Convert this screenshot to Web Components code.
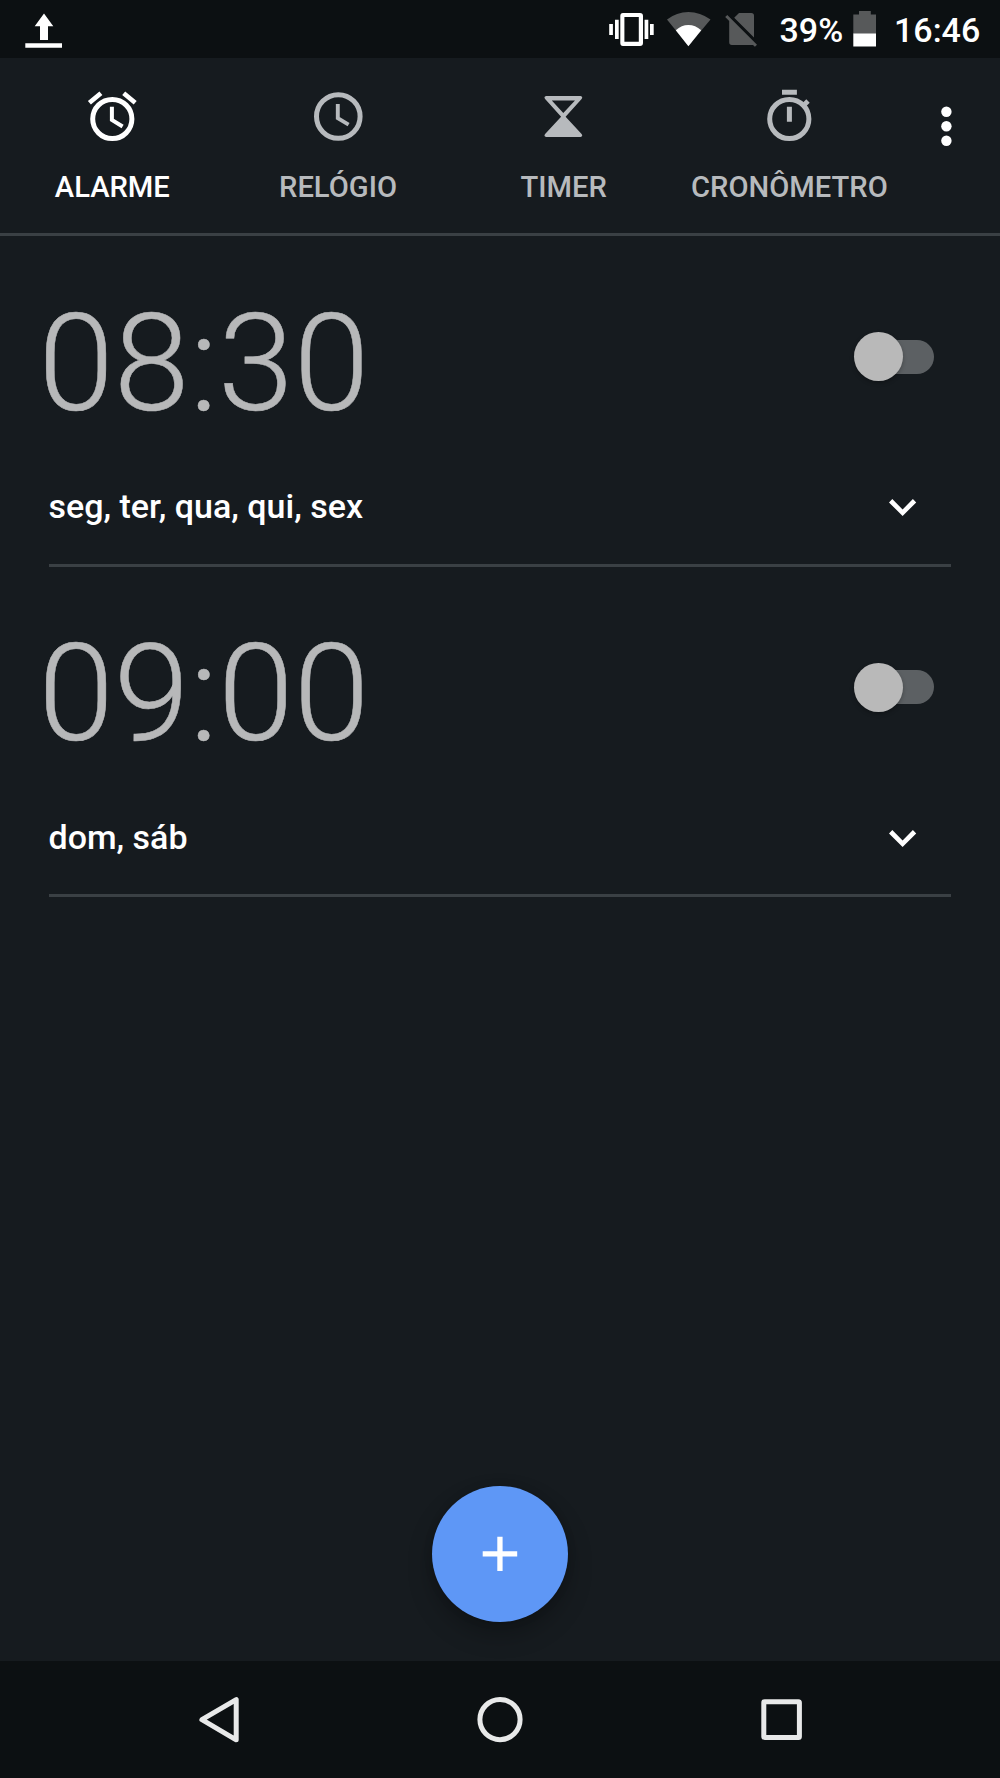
<!DOCTYPE html>
<html lang="pt-BR">
<head>
<meta charset="utf-8">
<title>Relógio</title>
<style>
html,body{margin:0;padding:0;background:#161b1f}
body{width:1000px;height:1778px;overflow:hidden;font-family:Roboto,"Liberation Sans",sans-serif;color:#fff}
</style>
</head>
<body>
<clock-app></clock-app>
<script>
const define = (name, html) => customElements.define(name, class extends HTMLElement {
  connectedCallback() {
    if (this.shadowRoot) return;
    const t = document.createElement('template');
    t.innerHTML = typeof html === 'function' ? html(this) : html;
    this.attachShadow({ mode: 'open' }).append(t.content.cloneNode(true));
  }
});

// Artwork is stored as [viewBox, markup]; the viewBox size is the drawn size.
const ICONS = {
  upload: ['24 0 40 58', '<path d="M44 13.4 53.3 26.2H48V40H40V26.2H34.7Z"/><path d="M25.3 43.3H62V47.7H25.3Z"/>'],
  vibrate: ['608 0 47 58', '<path fill-rule="evenodd" d="M623 13H640Q643 13 643 16V43Q643 46 640 46H623Q620.3 46 620.3 43V16Q620.3 13 623 13ZM624.4 17V41.8H638.8V17Z"/><path d="M615 19.7H618.7V39H615ZM609.2 24H612.9V35H609.2ZM644.6 19.7H648.3V39H644.6ZM650 24H653.7V35H650Z"/>'],
  wifi: ['666 0 46 58', '<path fill="#57595a" d="M688.4 46 667 19.6Q676.5 12 688.4 12T710.5 19.6Z"/><path d="M688.4 46.3 675.8 30.2Q681.5 25 688.4 25T701.2 30.2Z"/>'],
  nosim: ['724 0 34 58', '<path fill="#57595a" d="M739 13H751.3Q754 13 754 15.8V37.6L734.2 17.8ZM725.2 17 727.300 14.900 757 44.700 754.900 46.800 753 45H731.900Q729.200 45 729.200 42.300V21Z"/>'],
  battery: ['852 0 26 58', '<path fill="#57595a" d="M859 11H870.8V14.5H876V34H853.3V14.5H859Z"/><path d="M853.3 33.5H876V46.5H853.3Z"/>'],
  alarm: ['84 84 56.6 64', '<g fill="none" stroke="currentColor"><circle cx="112.3" cy="119" r="19.6" stroke-width="5"/><path stroke-width="4.7" d="M89.4 102.8 100.9 93.3M135.2 102.8 123.7 93.3"/><path stroke-width="4" d="M111.9 106.8V120L122.6 126.5"/></g>'],
  clock: ['309.7 84 56.6 64', '<g fill="none" stroke="currentColor"><circle cx="338" cy="116.5" r="21.8" stroke-width="5"/><path stroke-width="3.9" d="M337.5 104V118.2L348.3 124.6"/></g>'],
  timer: ['535.4 84 56.6 64', '<path fill-rule="evenodd" d="M546.5 96H581Q583.6 96.6 582 99.1L566 116.7 582 134.1Q583.6 136.6 581 137H546.5Q543.9 136.6 545.5 134.1L561.5 116.7 545.5 99.1Q543.9 96.6 546.5 96ZM552.2 100.6 563.7 113 575.4 100.6Z"/>'],
  stopwatch: ['761 84 56.6 64', '<g fill="none" stroke="currentColor"><circle cx="789.3" cy="119" r="19.6" stroke-width="5"/><path stroke-width="5" d="M782 92.2H796.9M789.4 106.7V121.7"/><path stroke-width="4.8" d="M803 106 808 101"/></g>'],
  more: ['940 106 13 41', '<circle cx="946.4" cy="111.7" r="5.2"/><circle cx="946.4" cy="126.2" r="5.2"/><circle cx="946.4" cy="140.7" r="5.2"/>'],
  chevron: ['888 498 29 19', '<path d="M889 502.4 892.3 499 902.6 509.4 912.9 499 916.2 502.4 902.6 516Z"/>'],
  plus: ['482 1536 36 36', '<path d="M497.3 1536.7H502.6V1551.2H517.2V1556.6H502.6V1571H497.3V1556.6H482.7V1551.2H497.3Z"/>'],
  back: ['197 1695 44 50', '<path fill="none" stroke="currentColor" stroke-width="5" stroke-linejoin="round" d="M201.9 1719.7 236.2 1699.6V1739.8Z"/>'],
  home: ['475 1695 50 50', '<circle cx="500" cy="1719.6" r="20.1" fill="none" stroke="currentColor" stroke-width="5"/>'],
  recent: ['759 1695 45 50', '<rect x="763.8" y="1701.8" width="35.6" height="35.6" rx="1" fill="none" stroke="currentColor" stroke-width="5"/>']
};

define('ui-icon', el => {
  const [box, art] = ICONS[el.getAttribute('name')];
  const [, , w, h] = box.split(' ');
  return `<style>:host{display:block;flex:none}svg{display:block}</style>
<svg width="${w}" height="${h}" viewBox="${box}" fill="currentColor">${art}</svg>`;
});

define('status-bar', `<style>
:host{display:flex;height:58px;background:#0c1012;padding:0 22px 0 24px;box-sizing:border-box;font-size:34px;font-weight:500;line-height:61px;white-space:nowrap}
.gap{flex:1}
.pct{width:64px;margin-left:21.5px}
.time{width:84px;margin-left:16px}
[name=wifi]{margin-left:11px}
[name=nosim]{margin-left:12px}
[name=battery]{margin-left:8.5px}
</style>
<ui-icon name="upload"></ui-icon><span class="gap"></span>
<ui-icon name="vibrate"></ui-icon><ui-icon name="wifi"></ui-icon><ui-icon name="nosim"></ui-icon>
<span class="pct">39%</span><ui-icon name="battery"></ui-icon><span class="time">16:46</span>`);

define('app-tab', el => `<style>
:host{display:flex;flex-direction:column;align-items:center;width:225.7px;flex:none;padding-top:26px;box-sizing:border-box;color:#b7babd;font-size:29.17px;font-weight:500;line-height:34px;white-space:nowrap}
:host([active]){color:#fff}
span{margin-top:22px}
</style><ui-icon name="${el.getAttribute('icon')}"></ui-icon><span><slot></slot></span>`);

define('tab-bar', `<style>
:host{display:flex;height:178px;box-sizing:border-box;border-bottom:3px solid #3a4044;margin-left:-.5px}
ui-icon{margin:48px 0 0 37.7px}
</style><slot></slot><ui-icon name="more"></ui-icon>`);

define('toggle-switch', `<style>
:host{display:flex;align-items:center;width:81px;height:49px}
i{display:block;width:49px;height:49px;border-radius:50%;background:#b9b9b9;box-shadow:0 2px 4px #0004;z-index:1}
b{display:block;width:56.5px;height:34px;margin-left:-25.5px;border-radius:0 17px 17px 0;background:#5c6063}
</style><i></i><b></b>`);

define('alarm-item', `<style>
:host{display:flex;flex-direction:column;height:330.5px;padding:0 49.5px 0 48.5px;box-sizing:border-box}
.top{display:flex;justify-content:space-between;height:206px;padding-right:15.5px}
.time{font-size:136.3px;font-weight:300;line-height:160px;color:#b7b8b9;-webkit-text-stroke:.5px #b7b8b9;margin:47.5px 0 0 -10.3px;white-space:nowrap}
toggle-switch{margin-top:96px}
.days{display:flex;flex:1;justify-content:space-between;padding-right:33.5px;font-size:34px;font-weight:500;line-height:40px;border-bottom:3px solid #3a4044}
.days span{margin-top:44px}
ui-icon{margin-top:56px}
</style>
<div class="top"><div class="time"><slot name="time"></slot></div><toggle-switch></toggle-switch></div>
<div class="days"><span><slot></slot></span><ui-icon name="chevron"></ui-icon></div>`);

define('add-button', `<style>
:host{display:flex;align-items:center;justify-content:center;width:136px;height:136px;border-radius:50%;background:#5e97f6;box-shadow:0 12px 24px #0004,0 0 8px #0002}
</style><ui-icon name="plus"></ui-icon>`);

define('nav-bar', `<style>
:host{display:flex;justify-content:space-between;height:117px;background:#0c1012;color:#e8e9e9;padding:34px 196px 0 197px;box-sizing:border-box;position:relative}
</style><ui-icon name="back"></ui-icon><ui-icon name="home"></ui-icon><ui-icon name="recent"></ui-icon>`);

define('clock-app', `<style>
:host{display:flex;flex-direction:column;width:1000px;height:1778px;background:#161b1f}
main{flex:1;display:flex;flex-direction:column}
add-button{margin:auto auto 39px}
</style>
<status-bar></status-bar>
<tab-bar>
<app-tab icon="alarm" active>ALARME</app-tab><app-tab icon="clock">RELÓGIO</app-tab><app-tab icon="timer">TIMER</app-tab><app-tab icon="stopwatch">CRONÔMETRO</app-tab>
</tab-bar>
<main>
<alarm-item><span slot="time">08:30</span>seg, ter, qua, qui, sex</alarm-item>
<alarm-item><span slot="time">09:00</span>dom, sáb</alarm-item>
<add-button></add-button>
</main>
<nav-bar></nav-bar>`);
</script>
</body>
</html>
